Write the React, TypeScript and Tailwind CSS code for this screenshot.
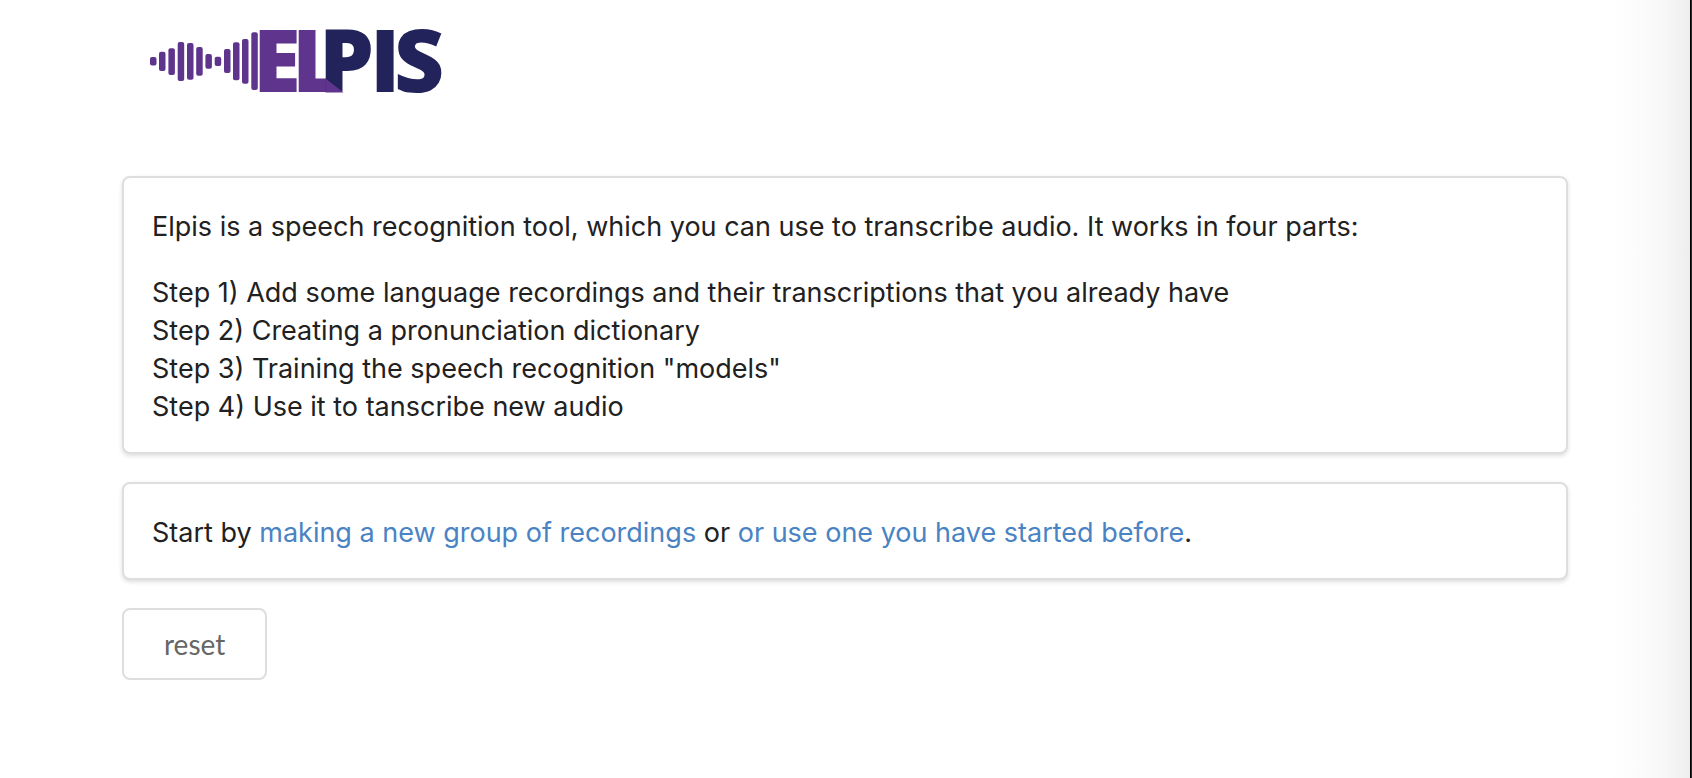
import type { ReactNode } from "react";

const bars: [number, number, number][] = [
  [0, 29, 37.5],
  [9, 23.7, 43],
  [18.4, 20.3, 47],
  [27.7, 14, 53],
  [37, 15, 51.7],
  [46.2, 19, 47.7],
  [55.4, 26, 40.7],
  [64.7, 28.7, 38],
  [74, 21, 45],
  [83, 14.3, 52.3],
  [92, 11, 55.7],
  [101.3, 4.3, 62],
];

function Logo() {
  return (
    <svg
      viewBox="0 0 292 66"
      role="img"
      aria-label="Elpis"
      className="h-[66px] w-[292px] overflow-visible"
      fontFamily="Open Sans, sans-serif"
      fontWeight={800}
      fontSize={87}
    >
      {bars.map(([x, top, bottom]) => (
        <rect key={x} x={x} y={top} width={6.5} height={bottom - top} rx={2} fill="#5f348c" />
      ))}
      <g fill="#5f348c">
        <text x={103} y={64}>E</text>
        <text x={142} y={64}>L</text>
      </g>
      <g fill="#23235c">
        <text x={169} y={64}>P</text>
        <text x={220} y={64}>I</text>
        <text x={244} y={64}>S</text>
      </g>
      <path d="M175.500 50.500L193.500 64.500H175.500Z" fill="#5f348c" />
    </svg>
  );
}

function Segment({ children }: { children: ReactNode }) {
  return (
    <section className="rounded-lg border-2 border-[#dededf] bg-white px-7 pt-[30px] pb-[26px] text-[27px] leading-[38px] text-[#212121] shadow-[0_2px_4px_0_rgba(34,36,38,0.15)]">
      {children}
    </section>
  );
}

export default function App() {
  return (
    <div className="flex min-h-screen bg-white font-['Inter',sans-serif]">
      <div className="flex grow bg-[linear-gradient(to_left,#eeeeee,#f8f8f8_28px,#fdfdfd_60px,#ffffff_84px)] px-[122px] pt-7">
        <div className="flex grow flex-col gap-7">
          <header className="mb-[54px] pl-7">
            <Logo />
          </header>
          <Segment>
            <p className="mb-7">
              Elpis is a speech recognition tool, which you can use to transcribe audio. It works in four parts:
            </p>
            <p>
              Step 1) Add some language recordings and their transcriptions that you already have
              <br />
              Step 2) Creating a pronunciation dictionary
              <br />
              Step 3) Training the speech recognition "models"
              <br />
              Step 4) Use it to tanscribe new audio
            </p>
          </Segment>
          <Segment>
            <p>
              Start by{" "}
              <a href="#new" className="text-[#4a83c4]">making a new group of recordings</a>
              {" "}or{" "}
              <a href="#existing" className="text-[#4a83c4]">or use one you have started before</a>.
            </p>
          </Segment>
          <button
            type="button"
            className="self-start rounded-lg border-2 border-[#dededf] bg-white px-10 py-[15px] font-['Lato',sans-serif] text-[28px] leading-[38px] text-[#666666]"
          >
            reset
          </button>
        </div>
      </div>
      <div className="w-0.5 shrink-0 border-l border-black bg-[#2b2c2e]" />
    </div>
  );
}
